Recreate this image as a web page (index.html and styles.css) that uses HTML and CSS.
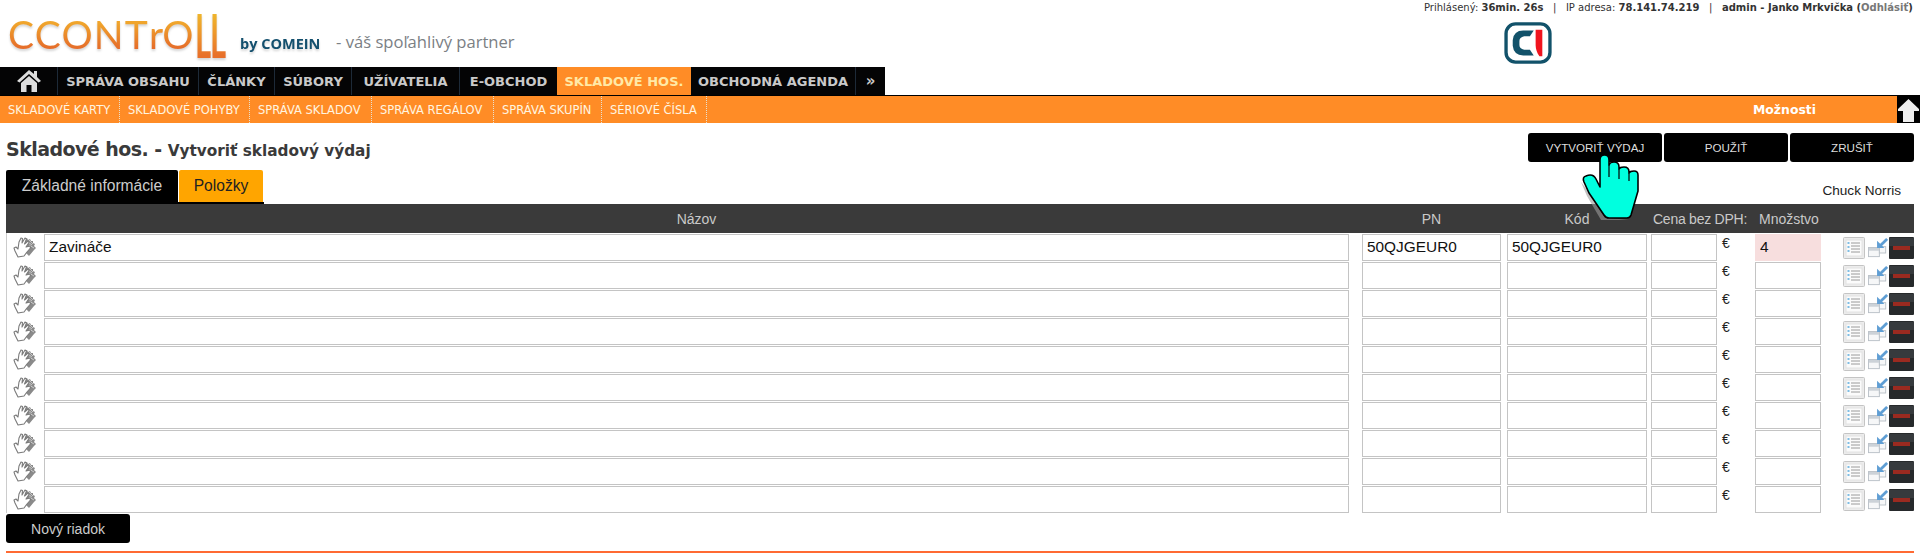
FILE: index.html
```html
<!DOCTYPE html>
<html lang="sk">
<head>
<meta charset="utf-8">
<title>cControll</title>
<link rel="stylesheet" href="styles.css">
</head>
<body>
<svg class="defs" width="0" height="0" aria-hidden="true">
  <symbol id="grip" viewBox="0 0 24 22">
    <path d="M12 3 L14 2 L15 4 L17 3 L18 5 L20 5 L20 7 L22 8 L21 10 L23 12 L21 14 L16 20 L12 16 Z" fill="#8a8a8a"/>
    <path d="M15 6 L19 9 M16 4 L20 8 M16 9 L21 12" stroke="#d8d8d8" stroke-width=".8" fill="none"/>
    <path d="M5 21 L2 15 L1 12 L3 11 L5 13 L6 6 L8 2 L9.500 2.500 L9 7 L12 2 L13.500 3 L11.500 8 L15 5 L16 6.500 L13 11 L17 10 L17.500 12 L14 16 L11 20 Z" fill="#fff" stroke="#7a7a7a" stroke-width="1.1" stroke-linejoin="round"/>
  </symbol>
  <symbol id="list" viewBox="0 0 22 22">
    <rect x=".5" y=".5" width="21" height="21" rx="1" fill="#ececec" stroke="#c4c4c4"/>
    <rect x="3" y="3" width="16" height="16" fill="#fbfbfb" stroke="#e2e2e2"/>
    <path d="M5.500 5v12" stroke="#7fbde4" stroke-width="2" stroke-dasharray="2 2"/>
    <path d="M8 6h9M8 9h9M8 12h9M8 15h9" stroke="#9a9a9a"/>
  </symbol>
  <symbol id="move" viewBox="0 0 22 22">
    <rect x=".5" y="10.500" width="12" height="10" fill="#f6f7f8" stroke="#b8bfc6"/>
    <rect x="1" y="11" width="11" height="3" fill="#ccd2d8"/>
    <rect x="12.500" y="9.500" width="7" height="7" fill="#f6f7f8" stroke="#b8bfc6"/>
    <path d="M21 1 L14 8" stroke="#5f9ed4" stroke-width="3"/>
    <path d="M10 3 V11 H18 Z" fill="#5f9ed4"/>
  </symbol>
  <symbol id="minus" viewBox="0 0 25 22">
    <rect width="25" height="22" rx="1" fill="#26292b"/>
    <rect y="1" width="25" height="8" fill="#363a3d"/>
    <rect x="4" y="9" width="17" height="4" fill="#9a2a20"/>
  </symbol>
</svg>

<header class="top">
  <div class="logo"><span class="logo-word">CCONT<span class="logo-r">r</span>O<span class="logo-l">L</span><span class="logo-l">L</span></span><span class="logo-by">by COMEIN</span></div>
  <div class="slogan">- váš spoľahlivý partner</div>
  <div class="session">Prihlásený: <b>36min. 26s</b> &nbsp; | &nbsp; IP adresa: <b>78.141.74.219</b> &nbsp; | &nbsp; <b>admin - Janko Mrkvička (<a class="logout" href="#">Odhlásiť</a>)</b></div>
  <svg class="ci" viewBox="0 0 50 44" aria-label="CI">
    <rect x="2" y="2" width="46" height="40" rx="10" fill="#fff" stroke="#12526a" stroke-width="3.5"/>
    <path d="M31 9 H20 Q10 9 9 19 V25 Q10 35 20 35 H31 L27 29 H21 Q16 28 16 24 V20 Q16 16 21 15 H27 Z" fill="#12526a"/>
    <path d="M33 8 H40 V36 H37 Q33 30 33 24 Z" fill="#f0141e"/>
  </svg>
</header>

<nav class="mainnav">
  <a class="nav-item nav-home" href="#">
    <svg viewBox="0 0 26 24" width="26" height="24"><path d="M13 1 L1 12 L3.500 13.500 L13 5 L22.500 13.500 L25 12 L21 8 V2 H18 V5 Z" fill="#ddd"/><path d="M5 14 L13 7 L21 14 V23 H15.500 V16 H10.500 V23 H5 Z" fill="#ddd"/></svg>
  </a>
  <a class="nav-item w141" href="#">SPRÁVA OBSAHU</a>
  <a class="nav-item w76" href="#">ČLÁNKY</a>
  <a class="nav-item w77" href="#">SÚBORY</a>
  <a class="nav-item w108" href="#">UŽÍVATELIA</a>
  <a class="nav-item w97" href="#">E-OBCHOD</a>
  <a class="nav-item active" href="#">SKLADOVÉ HOS.</a>
  <a class="nav-item w165" href="#">OBCHODNÁ AGENDA</a>
  <a class="nav-item w29" href="#">»</a>
</nav>

<div class="subnav">
  <a class="sub-item s120" href="#">SKLADOVÉ KARTY</a>
  <a class="sub-item s130" href="#">SKLADOVÉ POHYBY</a>
  <a class="sub-item s122" href="#">SPRÁVA SKLADOV</a>
  <a class="sub-item s122" href="#">SPRÁVA REGÁLOV</a>
  <a class="sub-item s108" href="#">SPRÁVA SKUPÍN</a>
  <a class="sub-item s105" href="#">SÉRIOVÉ ČÍSLA</a>
  <span class="sub-options">Možnosti</span>
  <span class="sub-up"><svg viewBox="0 0 23 27" width="23" height="27"><path d="M11.500 3 L22 13 V15 H17 V26 H6 V15 H1 V13 Z" fill="#eee"/></svg></span>
</div>

<main class="content">
  <div class="titlebar">
    <h1 class="title">Skladové hos. - <small>Vytvoriť skladový výdaj</small></h1>
    <div class="actions">
      <a class="btn btn-create" href="#">VYTVORIŤ VÝDAJ</a>
      <a class="btn btn-std" href="#">POUŽIŤ</a>
      <a class="btn btn-std" href="#">ZRUŠIŤ</a>
    </div>
  </div>

  <div class="tabsbar">
    <div class="tabs">
      <a class="tab tab-dark" href="#">Základné informácie</a>
      <a class="tab tab-on" href="#">Položky</a>
    </div>
    <div class="customer">Chuck Norris</div>
  </div>

  <div class="row head">
    <span></span><span class="c">Názov</span><span class="c pn-h">PN</span><span class="c kod-h">Kód</span><span class="price-h">Cena bez DPH:</span><span></span><span class="qty-h">Množstvo</span>
  </div>

  <div class="row"><svg class="grip"><use href="#grip"/></svg><input class="in" value="Zavináče"><span class="cell pn"><input class="in" value="50QJGEUR0"></span><span class="cell kod"><input class="in" value="50QJGEUR0"></span><span class="cell cena"><input class="in"></span><span class="eur">€</span><input class="in qty" value="4"><span class="tools"><svg class="t22"><use href="#list"/></svg><svg class="t20"><use href="#move"/></svg><svg class="t25"><use href="#minus"/></svg></span></div>
  <div class="row"><svg class="grip"><use href="#grip"/></svg><input class="in"><span class="cell pn"><input class="in"></span><span class="cell kod"><input class="in"></span><span class="cell cena"><input class="in"></span><span class="eur">€</span><input class="in"><span class="tools"><svg class="t22"><use href="#list"/></svg><svg class="t20"><use href="#move"/></svg><svg class="t25"><use href="#minus"/></svg></span></div>
  <div class="row"><svg class="grip"><use href="#grip"/></svg><input class="in"><span class="cell pn"><input class="in"></span><span class="cell kod"><input class="in"></span><span class="cell cena"><input class="in"></span><span class="eur">€</span><input class="in"><span class="tools"><svg class="t22"><use href="#list"/></svg><svg class="t20"><use href="#move"/></svg><svg class="t25"><use href="#minus"/></svg></span></div>
  <div class="row"><svg class="grip"><use href="#grip"/></svg><input class="in"><span class="cell pn"><input class="in"></span><span class="cell kod"><input class="in"></span><span class="cell cena"><input class="in"></span><span class="eur">€</span><input class="in"><span class="tools"><svg class="t22"><use href="#list"/></svg><svg class="t20"><use href="#move"/></svg><svg class="t25"><use href="#minus"/></svg></span></div>
  <div class="row"><svg class="grip"><use href="#grip"/></svg><input class="in"><span class="cell pn"><input class="in"></span><span class="cell kod"><input class="in"></span><span class="cell cena"><input class="in"></span><span class="eur">€</span><input class="in"><span class="tools"><svg class="t22"><use href="#list"/></svg><svg class="t20"><use href="#move"/></svg><svg class="t25"><use href="#minus"/></svg></span></div>
  <div class="row"><svg class="grip"><use href="#grip"/></svg><input class="in"><span class="cell pn"><input class="in"></span><span class="cell kod"><input class="in"></span><span class="cell cena"><input class="in"></span><span class="eur">€</span><input class="in"><span class="tools"><svg class="t22"><use href="#list"/></svg><svg class="t20"><use href="#move"/></svg><svg class="t25"><use href="#minus"/></svg></span></div>
  <div class="row"><svg class="grip"><use href="#grip"/></svg><input class="in"><span class="cell pn"><input class="in"></span><span class="cell kod"><input class="in"></span><span class="cell cena"><input class="in"></span><span class="eur">€</span><input class="in"><span class="tools"><svg class="t22"><use href="#list"/></svg><svg class="t20"><use href="#move"/></svg><svg class="t25"><use href="#minus"/></svg></span></div>
  <div class="row"><svg class="grip"><use href="#grip"/></svg><input class="in"><span class="cell pn"><input class="in"></span><span class="cell kod"><input class="in"></span><span class="cell cena"><input class="in"></span><span class="eur">€</span><input class="in"><span class="tools"><svg class="t22"><use href="#list"/></svg><svg class="t20"><use href="#move"/></svg><svg class="t25"><use href="#minus"/></svg></span></div>
  <div class="row"><svg class="grip"><use href="#grip"/></svg><input class="in"><span class="cell pn"><input class="in"></span><span class="cell kod"><input class="in"></span><span class="cell cena"><input class="in"></span><span class="eur">€</span><input class="in"><span class="tools"><svg class="t22"><use href="#list"/></svg><svg class="t20"><use href="#move"/></svg><svg class="t25"><use href="#minus"/></svg></span></div>
  <div class="row"><svg class="grip"><use href="#grip"/></svg><input class="in"><span class="cell pn"><input class="in"></span><span class="cell kod"><input class="in"></span><span class="cell cena"><input class="in"></span><span class="eur">€</span><input class="in"><span class="tools"><svg class="t22"><use href="#list"/></svg><svg class="t20"><use href="#move"/></svg><svg class="t25"><use href="#minus"/></svg></span></div>

  <a class="btn btn-new" href="#">Nový riadok</a>
  <div class="rule"></div>
</main>

<svg class="cursor" viewBox="-3 -2 62 68" width="62" height="68" aria-hidden="true">
  <path d="M-2 27 L4 41 L18 65 L46 65 L36 64 L22 63 L8 40 Z" fill="#9a9a9a" opacity=".6"/>
  <path d="M17 5 Q17 0 21.500 0 Q26 0 26 5 V10 Q27 7 31 7 Q36 7 36 12 V14 Q37 12 41 12 Q46 12 46 17 V18 Q47 16 51 16 Q55 16 55 20 V36 L48 60 Q47 63 44 63 H26 Q23 63 21 60 L6 38 L1 27 Q-1 22 3 21 Q10 18 13 24 L17 32 Z" fill="#00ffdf" stroke="#000" stroke-width="1.6" stroke-linejoin="round"/>
  <path d="M26 10 V22 M36 14 V24 M46 18 V26" stroke="#000" stroke-width="1.2" fill="none"/>
</svg>
</body>
</html>
```

FILE: styles.css
```css
* { box-sizing: border-box; }
html, body { margin: 0; padding: 0; }
body {
  width: 1920px;
  height: 558px;
  overflow: hidden;
  background: #fff;
  color: #222;
  font-family: "Liberation Sans", Arial, sans-serif;
  font-size: 14px;
  position: relative;
}
a { text-decoration: none; color: inherit; }
.defs { position: absolute; }

.top {
  height: 67px;
  display: grid;
  grid-template-columns: 336px 1088px 79px 50px 1fr;
  grid-template-rows: 22px 45px;
}
.logo {
  grid-column: 1;
  grid-row: 1 / 3;
  display: flex;
  align-items: flex-end;
  padding: 0 0 6px 8px;
  white-space: nowrap;
  filter: drop-shadow(0 2px 1px #d4d4d4);
}
.logo-word {
  display: block;
  width: 232px;
  height: 54px;
  font-family: "Lato", sans-serif;
  font-weight: 400;
  font-size: 39px;
  line-height: 54px;
  letter-spacing: 1.2px;
  color: transparent;
  background: linear-gradient(180deg, #f0a52c 30%, #e9802a 60%, #e4632a 85%);
  -webkit-background-clip: text;
  background-clip: text;
}
.logo-r { letter-spacing: -1px; }
.logo-l {
  display: inline-block;
  width: 36px;
  height: 54px;
  vertical-align: bottom;
  font-weight: 700;
  font-size: 62px;
  line-height: 54px;
  color: transparent;
  letter-spacing: 0;
  background: linear-gradient(180deg, #efc02c 0%, #ee9a2a 45%, #e8702a 90%);
  -webkit-background-clip: text;
  background-clip: text;
  transform: scaleX(.5);
  transform-origin: 0 100%;
  margin-right: -21px;
}
.logo-by {
  font-family: "Open Sans", sans-serif;
  font-weight: 700;
  font-size: 14.5px;
  line-height: 18px;
  color: #14506e;
  margin-bottom: 8px;
}
.slogan {
  grid-column: 2;
  grid-row: 1 / 3;
  font-family: "Open Sans", sans-serif;
  font-size: 16.6px;
  color: #7b8084;
  padding-top: 30px;
  line-height: 24px;
}
.session {
  grid-column: 3 / -1;
  grid-row: 1;
  font-family: "DejaVu Sans", sans-serif;
  font-size: 10px;
  line-height: 15px;
  white-space: nowrap;
  color: #333;
}
.logout { color: #777; }
.ci { grid-column: 4; grid-row: 2; width: 50px; height: 42px; }

.mainnav {
  display: flex;
  width: 885px;
  height: 28px;
  background: #040405;
}
.nav-item {
  display: flex;
  align-items: center;
  justify-content: center;
  height: 100%;
  font-family: "DejaVu Sans", sans-serif;
  font-weight: 700;
  font-size: 13px;
  color: #c9c9c9;
  border-right: 1px solid #1d2a38;
  white-space: nowrap;
}
.nav-home { width: 58px; }
.w141 { width: 141px; }
.w76 { width: 76px; }
.w77 { width: 77px; }
.w108 { width: 108px; }
.w97 { width: 97px; border-right: 0; }
.w165 { width: 165px; }
.w29 { width: 29px; border-right: 0; font-size: 15px; }
.active { width: 134px; background: #ff8c26; color: #ffe9a6; border-right: 0; }

.subnav {
  display: flex;
  align-items: stretch;
  height: 28px;
  background: #ff8c26;
  border-top: 1px solid #000;
}
.sub-item {
  display: flex;
  align-items: center;
  padding-left: 8px;
  font-family: "DejaVu Sans", sans-serif;
  font-size: 11.5px;
  color: #fff5e0;
  border-right: 1px dotted #e8e0d0;
  white-space: nowrap;
}
.s120 { width: 120px; }
.s130 { width: 130px; }
.s122 { width: 122px; }
.s108 { width: 108px; }
.s105 { width: 105px; }
.sub-options {
  margin-left: auto;
  width: 144px;
  display: flex;
  align-items: center;
  font-family: "DejaVu Sans", sans-serif;
  font-weight: 700;
  font-size: 12.4px;
  color: #fff;
}
.sub-up { width: 23px; background: #000; display: block; }
.sub-up svg { display: block; }

.content { padding: 0 6px; }
.titlebar {
  display: flex;
  justify-content: space-between;
  height: 47px;
}
.title {
  margin: 0;
  padding-top: 15px;
  font-family: "DejaVu Sans", sans-serif;
  font-size: 19px;
  letter-spacing: -.55px;
  line-height: 22px;
  font-weight: 700;
  color: #3a3a3a;
}
.title small { font-size: 15.3px; letter-spacing: 0; }
.actions { display: flex; gap: 2px; padding-top: 10px; }
.btn {
  display: flex;
  align-items: center;
  justify-content: center;
  height: 29px;
  background: #000;
  color: #ddd;
  border-radius: 3px;
  font-size: 11.6px;
  font-family: "Liberation Sans", sans-serif;
}
.btn-create { width: 134px; }
.btn-std { width: 124px; }

.tabsbar {
  display: flex;
  justify-content: space-between;
  align-items: flex-end;
  height: 34px;
}
.tabs { display: flex; gap: 1px; border-bottom: 2px solid #000; width: 258px; height: 34px; }
.tab {
  display: flex;
  align-items: center;
  justify-content: center;
  height: 32px;
  font-size: 15.6px;
  border-radius: 2px 2px 0 0;
}
.tab-dark { width: 172px; background: #000; color: #ccc; }
.tab-on { width: 84px; background: #ffa500; color: #222; }
.customer { font-size: 13.6px; line-height: 18px; padding-right: 13px; padding-bottom: 4px; color: #222; }

.row {
  display: grid;
  grid-template-columns: 37px 1305px 152px 146px 70px 38px 66px 93px;
  height: 28px;
  padding-top: 1px;
  align-items: start;
  border-left: 1px solid #ccc;
}
.cell { display: block; }
.pn { padding-left: 13px; }
.kod { padding-left: 6px; }
.cena { padding-left: 4px; }
.head {
  height: 29px;
  padding-top: 0;
  background: #3a3a3a;
  color: #c9c9c9;
  align-items: center;
  font-size: 14px;
  border-left: 0;
  grid-template-columns: 38px 1305px 152px 146px 70px 38px 66px 93px;
}
.c { text-align: center; }
.pn-h { padding-left: 13px; }
.kod-h { padding-left: 6px; }
.price-h { white-space: nowrap; padding-left: 6px; letter-spacing: -.25px; }
.qty-h { white-space: nowrap; padding-left: 4px; }
.grip { width: 24px; height: 22px; margin: 2px 0 0 6px; }
.in {
  display: block;
  height: 27px;
  margin: 0;
  padding: 0 4px 2px;
  border: 1px solid #c4c4c4;
  background: #fff;
  font-family: "Liberation Sans", sans-serif;
  font-size: 15.4px;
  color: #111;
  width: 100%;
  outline: 0;
}
.qty { background: #f7dede; border-color: #f7dede; }
.eur { font-size: 14px; padding-left: 5px; line-height: 18px; }
.tools { display: flex; align-items: center; padding: 0 0 0 22px; height: 27px; }
.t22 { width: 22px; height: 22px; margin-right: 3px; }
.t20 { width: 20px; height: 22px; margin-right: 1px; }
.t25 { width: 25px; height: 22px; }

.btn-new { width: 124px; font-size: 14px; color: #ccc; margin-top: 1px; }
.rule { height: 2px; margin-top: 8px; background: #ff6a33; }

.cursor { position: absolute; left: 1580px; top: 153px; }
```
